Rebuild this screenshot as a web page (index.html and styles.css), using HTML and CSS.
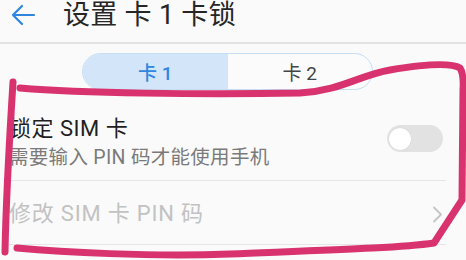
FILE: index.html
```html
<!DOCTYPE html>
<html lang="zh">
<head>
<meta charset="utf-8">
<link rel="stylesheet" href="styles.css">
</head>
<body>
<div class="screen">
  <header class="appbar">
    <svg class="back" width="26" height="22" viewBox="0 0 26 22">
      <path d="M24 11H3M12 2L3 11l9 9" fill="none" stroke="#2f86e0" stroke-width="2.2" stroke-linecap="round" stroke-linejoin="round"/>
    </svg>
    <h1 class="title">设置 卡 1 卡锁</h1>
  </header>
  <div class="tabs-wrap">
    <div class="tabs">
      <div class="tab active">卡 1</div>
      <div class="tab">卡 2</div>
    </div>
  </div>
  <div class="list">
    <div class="row row-toggle">
      <div class="texts">
        <div class="row-title">锁定 SIM 卡</div>
        <div class="row-sub">需要输入 PIN 码才能使用手机</div>
      </div>
      <div class="switch"><div class="knob"></div></div>
    </div>
    <div class="row row-link">
      <div class="row-title disabled">修改 SIM 卡 PIN 码</div>
      <svg class="chev" width="11" height="17" viewBox="0 0 11 17">
        <path d="M2 1.5l7 7-7 7" fill="none" stroke="#c4c4c4" stroke-width="1.8" stroke-linecap="round" stroke-linejoin="round"/>
      </svg>
    </div>
  </div>
  <svg class="scribble" width="466" height="260" viewBox="0 0 466 260">
    <path d="M13 82C10 130 6 200 5 252" fill="none" stroke="#d8336f" stroke-width="7" stroke-linecap="round"/>
    <path d="M20 88C80 93 200 95 300 93C340 91 360 75 390 70C420 65 450 62 460 68Q464 74 463 90L462 200L434 243C400 248 330 250 230 254C150 257 60 252 17 248" fill="none" stroke="#d8336f" stroke-width="7" stroke-linecap="round" stroke-linejoin="round"/>
  </svg>
</div>
</body>
</html>
```
FILE: styles.css
```css
* { box-sizing: border-box; }
html, body { margin: 0; padding: 0; }
body {
  background: #fafafa;
  font-family: Roboto, "Noto Sans CJK SC", sans-serif;
  width: 466px;
  height: 260px;
  overflow: hidden;
}
.screen { position: relative; width: 466px; height: 260px; }
.appbar {
  height: 44px;
  display: flex;
  align-items: flex-start;
  padding: 1px 0 0 10px;
  border-bottom: 2px solid #e3e3e3;
}
.back { flex: none; margin-top: 3px; }
.title {
  margin: 0 0 0 27px;
  font-size: 27px;
  font-weight: 400;
  color: #262626;
  line-height: 28px;
  letter-spacing: 0.3px;
}
.tabs-wrap { padding: 9px 0 0 82px; }
.tabs {
  display: flex;
  width: 291px;
  height: 37px;
  border: 1px solid #c6ddf2;
  border-radius: 19px;
  overflow: hidden;
  background: #fbfbfb;
}
.tab {
  flex: 1;
  display: flex;
  align-items: center;
  justify-content: center;
  font-size: 19px;
  color: #444;
}
.tab.active { background: #d3e5f8; color: #2f86e0; font-weight: 500; }
.list { padding: 0 20px 0 9px; }
.row {
  display: flex;
  align-items: center;
  justify-content: space-between;
  border-bottom: 1px solid #e6e6e6;
}
.row-toggle { height: 91px; padding-top: 17px; }
.row-link { height: 64px; padding-top: 3px; }
.row-title { font-size: 22px; color: #1f1f1f; line-height: 28px; letter-spacing: 0.5px; }
.row-title.disabled { color: #c2c2c2; letter-spacing: 0.8px; }
.row-sub { font-size: 19.5px; color: #7a7a7a; line-height: 28px; margin-top: 1px; letter-spacing: 0.3px; }
.switch {
  width: 56px;
  height: 27px;
  border-radius: 14px;
  background: #e2e2e2;
  display: flex;
  align-items: center;
  padding-left: 2px;
  margin-right: 3px;
  margin-top: -10px;
}
.knob {
  width: 22px;
  height: 22px;
  border-radius: 50%;
  background: #fff;
  box-shadow: 0 0 1px rgba(0,0,0,0.15);
}
.chev { margin-right: 3px; }
.scribble { position: absolute; left: 0; top: 0; pointer-events: none; }
```
